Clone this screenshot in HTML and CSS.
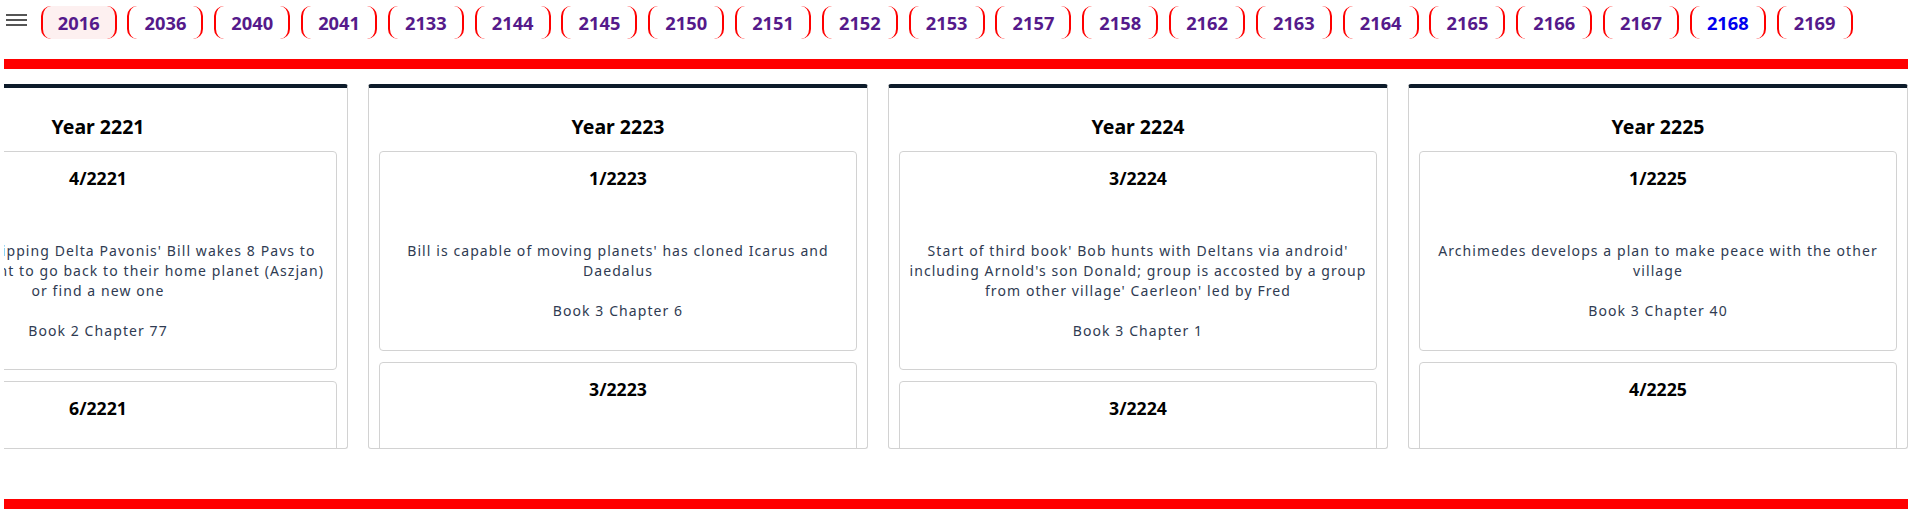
FILE: index.html
```html
<!DOCTYPE html>
<html lang="en">
<head>
<meta charset="utf-8">
<title>Timeline</title>
<link rel="stylesheet" href="styles.css">
</head>
<body>
<div class="page">
  <nav class="topnav">
    <svg class="menu-icon" width="21" height="12" viewBox="0 0 21 12" aria-hidden="true">
      <rect x="0" y="0" width="21" height="2" fill="#555"/>
      <rect x="0" y="5" width="21" height="2" fill="#555"/>
      <rect x="0" y="10" width="21" height="2" fill="#555"/>
    </svg>
    <div class="years">
      <a class="yr current" href="#">2016</a>
      <a class="yr" href="#">2036</a>
      <a class="yr" href="#">2040</a>
      <a class="yr" href="#">2041</a>
      <a class="yr" href="#">2133</a>
      <a class="yr" href="#">2144</a>
      <a class="yr" href="#">2145</a>
      <a class="yr" href="#">2150</a>
      <a class="yr" href="#">2151</a>
      <a class="yr" href="#">2152</a>
      <a class="yr" href="#">2153</a>
      <a class="yr" href="#">2157</a>
      <a class="yr" href="#">2158</a>
      <a class="yr" href="#">2162</a>
      <a class="yr" href="#">2163</a>
      <a class="yr" href="#">2164</a>
      <a class="yr" href="#">2165</a>
      <a class="yr" href="#">2166</a>
      <a class="yr" href="#">2167</a>
      <a class="yr unvisited" href="#">2168</a>
      <a class="yr" href="#">2169</a>
    </div>
  </nav>

  <div class="rule"></div>

  <div class="strip">
    <section class="year-col">
      <h2 class="year-title">Year 2221</h2>
      <article class="event">
        <h3 class="event-date">4/2221</h3>
        <p class="event-desc">Colonists are shipping Delta Pavonis' Bill wakes 8 Pavs to help any who want to go back to their home planet (Aszjan) or find a new one</p>
        <p class="event-ref">Book 2 Chapter 77</p>
      </article>
      <article class="event">
        <h3 class="event-date">6/2221</h3>
      </article>
    </section>

    <section class="year-col">
      <h2 class="year-title">Year 2223</h2>
      <article class="event">
        <h3 class="event-date">1/2223</h3>
        <p class="event-desc">Bill is capable of moving planets' has cloned Icarus and Daedalus</p>
        <p class="event-ref">Book 3 Chapter 6</p>
      </article>
      <article class="event">
        <h3 class="event-date">3/2223</h3>
      </article>
    </section>

    <section class="year-col">
      <h2 class="year-title">Year 2224</h2>
      <article class="event">
        <h3 class="event-date">3/2224</h3>
        <p class="event-desc">Start of third book' Bob hunts with Deltans via android' including Arnold's son Donald; group is accosted by a group from other village' Caerleon' led by Fred</p>
        <p class="event-ref">Book 3 Chapter 1</p>
      </article>
      <article class="event">
        <h3 class="event-date">3/2224</h3>
      </article>
    </section>

    <section class="year-col">
      <h2 class="year-title">Year 2225</h2>
      <article class="event">
        <h3 class="event-date">1/2225</h3>
        <p class="event-desc">Archimedes develops a plan to make peace with the other village</p>
        <p class="event-ref">Book 3 Chapter 40</p>
      </article>
      <article class="event">
        <h3 class="event-date">4/2225</h3>
      </article>
    </section>
  </div>

  <div class="rule rule-bottom"></div>
</div>
</body>
</html>
```
FILE: styles.css
```css
html, body {
  margin: 0;
  padding: 0;
  background: #ffffff;
}

body {
  font-family: "Noto Sans", "Open Sans", sans-serif;
  color: #000;
}

.page {
  padding: 0 5px 0 4px;
}

/* ---------- top navigation ---------- */
.topnav {
  display: flex;
  align-items: flex-start;
  padding-top: 6px;
  height: 33px;
}

.menu-icon {
  display: block;
  margin: 8px 0 0 2px;
  flex: none;
}

.years {
  display: flex;
  gap: 10.8px;
  margin-left: 13.7px;
}

.yr {
  flex: none;
  box-sizing: border-box;
  width: 76px;
  height: 33px;
  display: flex;
  align-items: center;
  justify-content: center;
  border-left: 2px solid #ff0000;
  border-right: 2px solid #ff0000;
  border-radius: 10px;
  background-clip: padding-box;
  font-weight: 700;
  font-size: 18.3px;
  line-height: 1;
  padding-top: 2px;
  color: #551a8b;
  text-decoration: none;
}

.yr.current {
  background-color: #fdf0f0;
}

.yr.unvisited {
  color: #0000ee;
}

/* ---------- red rules ---------- */
.rule {
  height: 10px;
  margin-top: 20px;
  background: #ff0000;
}

.rule-bottom {
  margin-top: 50px;
}

/* ---------- year strip ---------- */
.strip {
  display: flex;
  justify-content: flex-end;
  gap: 20px;
  margin-top: 15px;
  height: 365px;
  overflow: hidden;
}

.year-col {
  flex: none;
  box-sizing: border-box;
  width: 500px;
  height: 365px;
  overflow: hidden;
  border: 1px solid #d2d2d2;
  border-top: 4px solid #0d1b2a;
  border-radius: 3px;
  padding: 0 10px;
}

.year-title {
  margin: 25px 0 10px;
  font-size: 19.5px;
  line-height: 28px;
  font-weight: 700;
  text-align: center;
  color: #000;
}

.event {
  box-sizing: border-box;
  min-height: 200px;
  border: 1px solid #d2d2d2;
  border-radius: 4px;
  padding: 14px 6px 28px;
  margin-bottom: 11px;
  text-align: center;
}

.event-date {
  margin: 0;
  font-size: 17.7px;
  line-height: 24px;
  font-weight: 700;
  color: #000;
}

.event-desc,
.event-ref {
  font-size: 14px;
  line-height: 20px;
  letter-spacing: 1.08px;
  color: #2f3b52;
}

.event-desc {
  margin: 51px 0 0;
}

.event-ref {
  margin: 20px 0 0;
}
```
